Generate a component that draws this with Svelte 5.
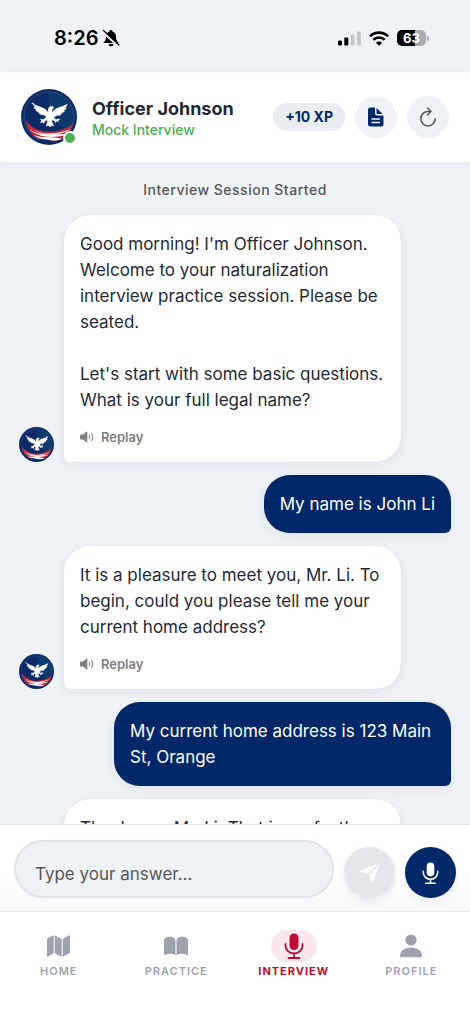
<script>
  let answer = ""

  let messages = [
    {
      from: "officer",
      text: "Good morning! I'm Officer Johnson. Welcome to your naturalization interview practice session. Please be seated.\n\nLet's start with some basic questions. What is your full legal name?"
    },
    { from: "user", text: "My name is John Li" },
    {
      from: "officer",
      text: "It is a pleasure to meet you, Mr. Li. To begin, could you please tell me your current home address?"
    },
    { from: "user", text: "My current home address is 123 Main St, Orange" },
    {
      from: "officer",
      text: "Thank you, Mr. Li. That is perfectly clear."
    }
  ]

  let tabs = [
    { id: "home", label: "Home" },
    { id: "practice", label: "Practice" },
    { id: "interview", label: "Interview" },
    { id: "profile", label: "Profile" }
  ]
  let current = "interview"
</script>

{#snippet seal()}
  <svg class="seal" viewBox="0 0 168 168" aria-hidden="true">
    <circle cx="84" cy="84" r="84" fill="#0b2a66" />
    <path d="M84 8a76 76 0 0 1 76 76c0 18-6 34-16 46L84 84z" fill="#0d3a6b" />
    <circle cx="84" cy="84" r="75" fill="none" stroke="#45679a" stroke-width="1.5" />
    <path d="M14 92c24 40 88 50 142 14-3 12-9 23-17 31-30 28-76 28-104 0C23 126 16 110 14 92z" fill="#c8283c" />
    <path d="M18 106c26 32 76 36 132 14-42 27-100 23-132-14z" fill="#fff" />
    <path d="M25 120c30 22 62 14 116 16-46 14-88 10-116-16z" fill="#fff" />
    <path d="M38 138c26 11 52 2 86 12-28 9-62 6-86-12z" fill="#fff" />
    <path d="M50 150c20-1 38 2 54 9-18 5-38 1-54-9z" fill="#0b2a66" />
    <path
      d="M32 43c12 8 28 11 39 17 5 3 8 7 9 12l3-3c-2-7-1-14 5-16 4-1 8 0 10 4l-5 3c-1 4 0 8 2 11 2-6 7-10 14-13 10-4 20-6 29-12-1 6-4 9-8 11l6 0c-2 5-6 7-10 8l4 2c-3 4-7 5-11 5l2 3c-4 4-9 4-13 4-4 1-8 4-10 9l8 4c3-3 7-2 10-1l-5 3 1 4-5-3-4 6-1-6-9-3-1 6 6 13-6-2-5 5-5-5-6 2 4-14-2-5-8 6-1 5-4-4-6 2 3-6-3-4 8 1 9-7c-2-5-5-7-10-8-5 0-9-1-12-5l3-2c-5 0-10-2-12-6l4-1c-5-2-9-4-10-9l5 1c-5-4-7-8-7-13z"
      fill="#fff"
      stroke="#fff"
      stroke-width="2"
      stroke-linejoin="round"
    />
  </svg>
{/snippet}

{#snippet mic()}
  <svg viewBox="0 0 20 26" aria-hidden="true">
    <rect x="5.5" y="0.500" width="9" height="16.500" rx="4.500" fill="currentColor" />
    <path d="M1.500 11v1.500a8.500 8 0 0 0 17 0V11M10 20.500V25M4.500 25h11" fill="none" stroke="currentColor" stroke-width="1.800" stroke-linecap="round" />
  </svg>
{/snippet}

<div class="app">
  <div class="status">
    <div class="clock">
      <span>8:26</span>
      <svg width="18" height="18" viewBox="0 0 18 18" aria-hidden="true">
        <path d="M9 1c.9 0 1.500.6 1.500 1.400 2.300.8 3.500 2.700 3.500 5.100 0 3.500 1 4.500 2.400 5.900V14H1.600v-.6C3 12 4 11 4 7.500c0-2.400 1.200-4.300 3.500-5.100C7.500 1.600 8.100 1 9 1zM6.500 15h5a2.500 2.500 0 0 1-5 0z" />
        <path d="M1 3l15.500 14" stroke="#eff3f8" stroke-width="2.500" />
        <path d="M1.500 1.500l15.500 14.500" stroke="#000" stroke-width="1.400" stroke-linecap="round" />
      </svg>
    </div>
    <div class="signals">
      <svg width="23" height="15" viewBox="0 0 23 15" aria-hidden="true">
        <rect x="0" y="9.500" width="4" height="5" rx="1.200" />
        <rect x="6.300" y="6.500" width="4" height="8" rx="1.200" />
        <rect x="12.600" y="3.500" width="4" height="11" rx="1.200" fill="#c3c7cc" />
        <rect x="18.900" y="0.500" width="4" height="14" rx="1.200" fill="#c3c7cc" />
      </svg>
      <svg width="20" height="15" viewBox="0 0 20 15" aria-hidden="true">
        <g fill="none" stroke="#000" stroke-width="2.600">
          <path d="M1 5.300a12.800 12.800 0 0 1 18 0" />
          <path d="M4.300 8.800a8.200 8.200 0 0 1 11.400 0" />
        </g>
        <path d="M10 14.800L6.900 11.700a4.400 4.400 0 0 1 6.200 0z" />
      </svg>
      <span class="battery">63</span>
    </div>
  </div>

  <header>
    <div class="portrait">
      {@render seal()}
      <span class="online"></span>
    </div>
    <div class="who">
      <h1>Officer Johnson</h1>
      <p>Mock Interview</p>
    </div>
    <span class="xp">+10 XP</span>
    <button class="round" aria-label="Transcript">
      <svg width="16" height="20" viewBox="0 0 16 20" aria-hidden="true">
        <path d="M2.500 0.500H7v5.500A2.500 2.500 0 0 0 9.500 8.500H15.500V17a2.500 2.500 0 0 1-2.500 2.500H2.500A2.500 2.500 0 0 1 0 17V3A2.500 2.500 0 0 1 2.500.5z" fill="#002868" />
        <path d="M8.500 1v4.800c0 .8.500 1.200 1.200 1.200h5z" fill="#002868" />
        <path d="M4 12h7.500M4 15.500h7.500" stroke="#eff3f8" stroke-width="1.300" stroke-linecap="round" />
      </svg>
    </button>
    <button class="round" aria-label="Restart">
      <svg width="18" height="20" viewBox="0 0 18 20" fill="none" stroke="#555" stroke-width="1.500" stroke-linecap="round" stroke-linejoin="round" aria-hidden="true">
        <path d="M11.500 4.500H9a7.200 7.200 0 1 0 7.200 7.200" />
        <path d="M8.500 1l3.500 3.500L8.500 8" />
      </svg>
    </button>
  </header>

  <main>
    <p class="started">Interview Session Started</p>
    {#each messages as message}
      <div class="row {message.from}">
        {#if message.from === "officer"}
          <div class="mini">{@render seal()}</div>
        {/if}
        <div class="bubble">
          <p>{message.text}</p>
          {#if message.from === "officer"}
            <button class="replay">
              <svg width="15" height="12" viewBox="0 0 15 12" aria-hidden="true">
                <path d="M0 4.500Q0 3.500 1 3.500H3L6.300.7Q7.300 0 7.300 1v10q0 1-1 .3L3 8.500H1Q0 8.500 0 7.500z" fill="currentColor" />
                <path d="M9.300 4q1.400 2 0 4M11.500 2.300q2.800 3.700 0 7.400" fill="none" stroke="currentColor" stroke-linecap="round" />
              </svg>
              Replay
            </button>
          {/if}
        </div>
      </div>
    {/each}
  </main>

  <form on:submit|preventDefault>
    <input type="text" aria-label="Your answer" placeholder="Type your answer..." bind:value={answer} />
    <button class="send" aria-label="Send">
      <svg width="20" height="20" viewBox="0 0 20 20" aria-hidden="true">
        <path d="M18 .7L1.200 7C-.2 7.600-.2 8.600 1.200 9.100l6.600 1.700z" fill="#fff" />
        <path d="M19.300 2L13 18.300c-.6 1.500-1.700 1.500-2.200.1L9 12z" fill="#fff" />
      </svg>
    </button>
    <button class="speak" type="button" aria-label="Speak">{@render mic()}</button>
  </form>

  <nav aria-label="Main">
    {#each tabs as tab}
      <a href="#{tab.id}" class:active={tab.id === current}>
        <span class="icon">
          {#if tab.id === "home"}
            <svg width="23" height="22" viewBox="0 0 23 22" fill="currentColor" aria-hidden="true">
              <path d="M0 4.500Q0 3.700.7 3.300L6.700.3v18L1.200 21.500Q0 22 0 20.800z" />
              <path d="M7.700.3l7 3.700v17.700l-7-3.400z" />
              <path d="M15.700 4L21.800.6Q23 0 23 1.200V17q0 .8-.6 1.200L15.700 21.700z" />
            </svg>
          {:else if tab.id === "practice"}
            <svg width="24" height="20" viewBox="0 0 24 20" fill="currentColor" aria-hidden="true">
              <path d="M0 4.500C0 2.500 2.500.8 5.700.8S11.500 2.500 11.500 4.500V19C8.500 17.300 4 17.300.9 19Q0 19.300 0 18.500z" />
              <path d="M12.500 4.500c0-2 2.600-3.700 5.800-3.700S24 2.500 24 4.500v14q0 .8-.9.500c-3.100-1.700-7.600-1.700-10.600 0z" />
            </svg>
          {:else if tab.id === "interview"}
            {@render mic()}
          {:else}
            <svg width="22" height="24" viewBox="0 0 22 24" fill="currentColor" aria-hidden="true">
              <circle cx="11" cy="6" r="5.600" />
              <path d="M0 22c0-5 4.500-8.500 11-8.500S22 17 22 22q0 1.300-1.300 1.300H1.300Q0 23.300 0 22z" />
            </svg>
          {/if}
        </span>
        <span class="label">{tab.label}</span>
      </a>
    {/each}
  </nav>
</div>

<style>
  :global(body) {
    margin: 0;
    background: #eff3f8;
  }

  .app {
    display: flex;
    flex-direction: column;
    height: 100vh;
    font-family: Inter, "Liberation Sans", sans-serif;
    color: #1f2937;
  }

  h1, p {
    margin: 0;
  }

  button {
    display: flex;
    align-items: center;
    justify-content: center;
    flex: none;
    padding: 0;
    border: none;
    font: inherit;
    cursor: pointer;
  }

  svg {
    display: block;
  }

  .status {
    display: flex;
    align-items: center;
    justify-content: space-between;
    flex: none;
    height: 72px;
    padding: 4px 44px 0 54px;
    box-sizing: border-box;
    color: #000;
  }

  .clock {
    display: flex;
    align-items: center;
    gap: 4px;
    font-size: 20px;
    font-weight: 600;
  }

  .signals {
    display: flex;
    align-items: center;
    gap: 8px;
  }

  .battery {
    position: relative;
    width: 29px;
    border-radius: 5px;
    background: linear-gradient(90deg, #000 63%, #a9adb1 63%);
    color: #fff;
    font-size: 13px;
    font-weight: 700;
    line-height: 16px;
    text-align: center;
  }

  .battery::after {
    content: "";
    position: absolute;
    top: 6px;
    right: -3px;
    width: 2px;
    height: 5px;
    border-radius: 0 2px 2px 0;
    background: #a9adb1;
  }

  header {
    position: relative;
    display: flex;
    align-items: center;
    flex: none;
    height: 90px;
    padding: 0 21px;
    background: #fff;
    box-shadow: 0 2px 8px rgba(0, 20, 60, .06);
  }

  .seal {
    width: 100%;
    height: 100%;
  }

  .portrait {
    position: relative;
    flex: none;
    width: 56px;
    height: 56px;
  }

  .online {
    position: absolute;
    right: 0;
    bottom: 0;
    width: 10px;
    height: 10px;
    border: 2px solid #fff;
    border-radius: 50%;
    background: #4caf50;
  }

  .who {
    flex: 1;
    min-width: 0;
    margin-left: 15px;
    padding-top: 3px;
  }

  h1 {
    font-size: 18px;
    font-weight: 700;
    line-height: 22px;
    white-space: nowrap;
  }

  .who p {
    color: #4caf50;
    font-size: 14px;
    font-weight: 500;
    line-height: 20px;
  }

  .xp {
    padding: 0 12px;
    border-radius: 14px;
    background: #e9edf2;
    color: #002868;
    font-size: 14px;
    font-weight: 700;
    line-height: 28px;
    white-space: nowrap;
  }

  .round {
    width: 42px;
    height: 42px;
    margin-left: 10px;
    border-radius: 50%;
    background: #eff3f8;
  }

  main {
    display: flex;
    flex-direction: column;
    flex: 1;
    gap: 13px;
    min-height: 0;
    padding: 18px 19px 0;
    overflow-y: auto;
    scrollbar-width: none;
  }

  .started {
    margin-bottom: 2px;
    color: #555;
    font-size: 14px;
    font-weight: 500;
    letter-spacing: .5px;
    line-height: 20px;
    text-align: center;
  }

  .row {
    display: flex;
    align-items: flex-end;
    flex: none;
    gap: 10px;
  }

  .row.user {
    justify-content: flex-end;
  }

  .mini {
    flex: none;
    width: 35px;
    height: 35px;
  }

  .bubble {
    max-width: 78%;
    padding: 16px;
    border-radius: 26px 26px 26px 6px;
    box-sizing: border-box;
    background: #fff;
    box-shadow: 0 0 1px rgba(0, 20, 60, .12), 0 3px 12px rgba(0, 20, 60, .06);
  }

  .user .bubble {
    border-radius: 26px 26px 6px 26px;
    background: #002868;
    color: #fff;
  }

  .bubble p {
    font-size: 17px;
    line-height: 26px;
    white-space: pre-line;
  }

  .replay {
    gap: 6px;
    margin-top: 15px;
    background: none;
    color: #808080;
    font-size: 13px;
    font-weight: 600;
    line-height: 18px;
  }

  form {
    position: relative;
    display: flex;
    align-items: flex-end;
    flex: none;
    gap: 10px;
    padding: 15px 14px 13px;
    border-top: 1px solid #e2e5ea;
    background: linear-gradient(#fff 60%, #f7f8fa);
  }

  input {
    flex: 1;
    min-width: 0;
    height: 58px;
    padding: 10px 19px 0;
    border: 2px solid #e1e5ea;
    border-radius: 29px;
    box-sizing: border-box;
    background: #eff3f8;
    color: #1f2937;
    font: inherit;
    font-size: 17px;
  }

  input::placeholder {
    color: #555;
    opacity: 1;
  }

  .send, .speak {
    width: 51px;
    height: 51px;
    border-radius: 50%;
    box-shadow: 0 3px 8px rgba(0, 20, 60, .08);
  }

  .send {
    background: #e5e7eb;
  }

  .speak {
    background: #002868;
    color: #fff;
  }

  .speak :global(svg) {
    width: 17px;
    height: 22px;
  }

  nav {
    display: flex;
    flex: none;
    padding: 18px 0 44px;
    border-top: 1px solid #e8eaee;
    background: #fff;
  }

  nav a {
    display: flex;
    flex: 1;
    flex-direction: column;
    align-items: center;
    color: #9ca3af;
    text-decoration: none;
  }

  .icon {
    display: flex;
    align-items: center;
    justify-content: center;
    width: 46px;
    height: 32px;
    border-radius: 16px;
  }

  .label {
    font-size: 11px;
    font-weight: 600;
    letter-spacing: 1px;
    line-height: 18px;
    text-transform: uppercase;
  }

  .active {
    color: #bf0a30;
  }

  .active .icon {
    background: #f9e7eb;
  }

  .active .icon :global(svg) {
    width: 20px;
    height: 26px;
  }

  .active .label {
    font-weight: 700;
  }
</style>
